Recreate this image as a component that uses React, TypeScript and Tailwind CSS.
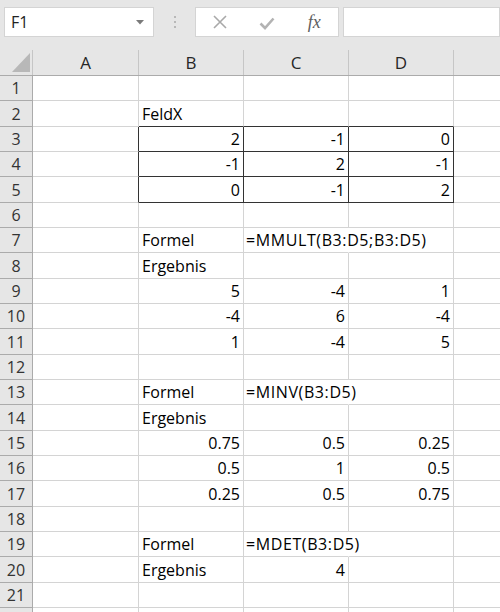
const font = { fontFamily: '"Open Sans", "Noto Sans", sans-serif' };

type Cell = { t?: string; r?: boolean; over?: boolean };

const blank: Cell = {};
const L = (t: string): Cell => ({ t });
const R = (t: string): Cell => ({ t, r: true });
const O = (t: string): Cell => ({ t, over: true });

// columns B, C, D per row (A and E are empty)
const rows: Cell[][] = [
  [blank, blank, blank],
  [L("FeldX"), blank, blank],
  [R("2"), R("-1"), R("0")],
  [R("-1"), R("2"), R("-1")],
  [R("0"), R("-1"), R("2")],
  [blank, blank, blank],
  [L("Formel"), O("=MMULT(B3:D5;B3:D5)"), blank],
  [L("Ergebnis"), blank, blank],
  [R("5"), R("-4"), R("1")],
  [R("-4"), R("6"), R("-4")],
  [R("1"), R("-4"), R("5")],
  [blank, blank, blank],
  [L("Formel"), O("=MINV(B3:D5)"), blank],
  [L("Ergebnis"), blank, blank],
  [R("0.75"), R("0.5"), R("0.25")],
  [R("0.5"), R("1"), R("0.5")],
  [R("0.25"), R("0.5"), R("0.75")],
  [blank, blank, blank],
  [L("Formel"), O("=MDET(B3:D5)"), blank],
  [L("Ergebnis"), R("4"), blank],
  [blank, blank, blank],
  [blank, blank, blank],
];

const heights = [
  "h-[25px]", "h-[26px]", "h-[25px]", "h-[25px]", "h-[26px]", "h-[25px]", "h-[25px]",
  "h-[26px]", "h-[25px]", "h-[25px]", "h-[26px]", "h-[25px]", "h-[25px]", "h-[26px]",
  "h-[25px]", "h-[25px]", "h-[26px]", "h-[25px]", "h-[25px]", "h-[26px]", "h-[25px]",
  "h-[25px]",
];

// table B3:D5 sits in rows index 2..4
const inBox = (r: number) => r >= 2 && r <= 4;

function Toolbar() {
  return (
    <div className="flex h-[50px] items-start bg-[#e6e6e6] pl-[4px] pt-[7px]">
      <div className="flex h-[30px] w-[150px] items-center justify-between border border-[#d4d4d4] bg-white pl-[6px] pr-[9px]">
        <span className="text-[16px] text-[#222]">F1</span>
        <svg width="8" height="5" viewBox="0 0 8 5">
          <polygon points="0,0 8,0 4,4.5" fill="#7a7a7a" />
        </svg>
      </div>
      <div className="flex h-[30px] w-[41px] flex-col items-center justify-center gap-[3px]">
        <div className="h-[2px] w-[2px] rounded-full bg-[#a8a8a8]" />
        <div className="h-[2px] w-[2px] rounded-full bg-[#a8a8a8]" />
        <div className="h-[2px] w-[2px] rounded-full bg-[#a8a8a8]" />
      </div>
      <div className="flex h-[30px] w-[144px] items-center border border-[#d4d4d4] bg-white">
        <div className="flex w-[48px] justify-center">
          <svg width="14" height="14" viewBox="0 0 14 14">
            <path d="M1 1L13 13M13 1L1 13" stroke="#a9a9a9" strokeWidth="1.6" />
          </svg>
        </div>
        <div className="flex w-[48px] justify-center pt-[2px]">
          <svg width="16" height="13" viewBox="0 0 16 13">
            <path d="M1.5 6.5L6 11L14.5 1.5" stroke="#b3b3b3" strokeWidth="2.6" fill="none" />
          </svg>
        </div>
        <div className="flex w-[48px] justify-center">
          <span
            className="text-[18px] italic leading-none text-[#5e5e5e]"
            style={{ fontFamily: '"Liberation Serif", serif' }}
          >
            fx
          </span>
        </div>
      </div>
      <div className="ml-[4px] h-[30px] flex-1 border border-[#d4d4d4] bg-white" />
    </div>
  );
}

function ColumnHeader() {
  const cols = ["A", "B", "C", "D"];
  return (
    <div className="flex h-[26px] border-b border-[#ababab] bg-[#e6e6e6]">
      <div className="relative w-[33px] border-r border-[#c6c6c6]">
        <svg className="absolute left-0 top-0" width="33" height="25" viewBox="0 0 33 25">
          <polygon points="12,22 30,22 30,3" fill="#b8b8b8" />
        </svg>
      </div>
      {cols.map((c, i) => (
        <div
          key={c}
          className={`flex items-center justify-center border-r border-[#c6c6c6] text-[17px] text-[#262626] ${
            i === 0 ? "w-[106px]" : "w-[105px]"
          }`}
        >
          {c}
        </div>
      ))}
      <div className="flex-1" />
    </div>
  );
}

function Grid() {
  return (
    <div className="bg-white">
      {rows.map((cells, r) => {
        const nextBox = inBox(r + 1);
        return (
          <div key={r} className={`flex ${heights[r]}`}>
            <div className="flex w-[33px] items-center justify-center border-r border-b border-[#ababab] bg-[#e6e6e6] text-[16px] text-[#333]">
              {r < 21 ? r + 1 : ""}
            </div>
            {/* column A */}
            <div
              className={`w-[106px] border-b border-[#d4d4d4] border-r ${
                inBox(r) ? "border-r-[#333]" : "border-r-[#d4d4d4]"
              }`}
            />
            {cells.map((cell, c) => {
              const boxed = inBox(r) || nextBox;
              const bottom = boxed ? "border-b-[#333]" : "border-b-[#d4d4d4]";
              const right = inBox(r)
                ? "border-r-[#333]"
                : cell.over
                ? "border-r-transparent"
                : "border-r-[#d4d4d4]";
              return (
                <div
                  key={c}
                  className={`relative flex w-[105px] items-center border-b border-r ${bottom} ${right} ${
                    cell.r ? "justify-end pr-[3px]" : "justify-start pl-[3px]"
                  }`}
                >
                  {cell.t && (
                    <span
                      className={`whitespace-nowrap text-[16px] text-black ${
                        cell.over ? "absolute left-[2px] tracking-[0.6px]" : ""
                      }`}
                    >
                      {cell.t}
                    </span>
                  )}
                </div>
              );
            })}
            <div className="flex-1 border-b border-[#d4d4d4]" />
          </div>
        );
      })}
    </div>
  );
}

export default function App() {
  return (
    <div className="h-[612px] w-[500px] overflow-hidden bg-white" style={font}>
      <Toolbar />
      <ColumnHeader />
      <Grid />
    </div>
  );
}
